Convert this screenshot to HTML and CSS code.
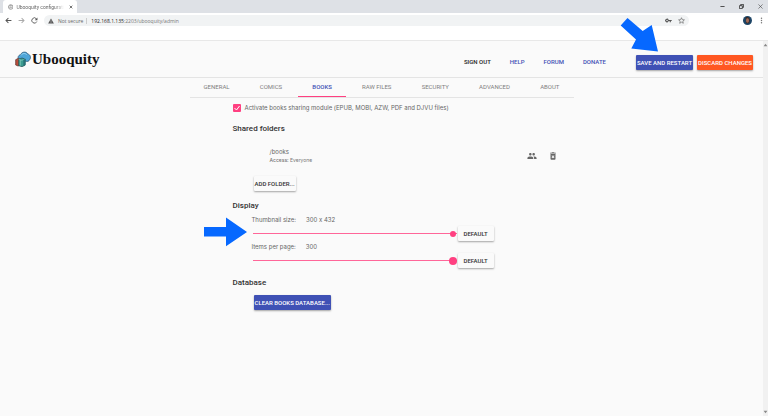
FILE: index.html
```html
<!DOCTYPE html>
<html lang="en">

<head>
  <meta charset="utf-8">
  <meta name="viewport" content="width=device-width, initial-scale=1.0">
  <title>Ubooquity configuration</title>
  <link rel="stylesheet" href="styles.css">
</head>

<body>
  <div class="tab-strip">
    <div class="browser-tab">
      <svg class="favicon" viewBox="0 0 24 24" fill="none" stroke="#777" stroke-width="3">
        <circle cx="12" cy="12" r="10" />
        <path d="M6 8l6-3 6 3M5 13l7 3 7-3M12 5v11" stroke-width="2" />
      </svg>
      <span class="tab-title">Ubooquity configurati</span>
      <button class="icon-btn tab-close" aria-label="Close tab">
        <svg viewBox="0 0 12 12" stroke="#333" stroke-width="2"><path d="M2 2l8 8M10 2l-8 8" /></svg>
      </button>
    </div>
    <div class="window-buttons">
      <button class="icon-btn" aria-label="Minimize">
        <svg viewBox="0 0 12 12" stroke="#333" stroke-width="2"><path d="M1 6h10" /></svg>
      </button>
      <button class="icon-btn" aria-label="Restore">
        <svg viewBox="0 0 12 12" fill="none" stroke="#333" stroke-width="2"><path d="M1 4h7v7H1zM4 4V1h7v7H8" /></svg>
      </button>
      <button class="icon-btn" aria-label="Close">
        <svg viewBox="0 0 12 12" stroke="#444" stroke-width="1.4"><path d="M1 1l10 10M11 1L1 11" /></svg>
      </button>
    </div>
  </div>

  <div class="toolbar">
    <button class="icon-btn" aria-label="Back">
      <svg viewBox="0 0 24 24" fill="#555"><path d="M22 10.500H7.200l5.600-5.600L10.500 2.500 1 12l9.500 9.500 2.300-2.400-5.600-5.600H22z" /></svg>
    </button>
    <button class="icon-btn" aria-label="Forward">
      <svg viewBox="0 0 24 24" fill="#aaa"><path d="M2 10.500h14.800l-5.600-5.600 2.300-2.400L23 12l-9.500 9.500-2.300-2.400 5.600-5.600H2z" /></svg>
    </button>
    <button class="icon-btn" aria-label="Reload">
      <svg viewBox="0 0 24 24" fill="none" stroke="#555" stroke-width="3"><path d="M20 15.500A9 9 0 1 1 18.500 6" /><path d="M22 2v9h-9z" fill="#555" stroke="none" /></svg>
    </button>
    <div class="address-bar">
      <svg class="warning" viewBox="0 0 24 24"><path d="M12 2l11.500 20H.5z" fill="#555" /><path d="M12 9v6M12 17v3" stroke="#f1f3f4" stroke-width="2" /></svg>
      <span class="not-secure">Not secure</span>
      <span class="url"><b>192.168.1.135</b>:2203/ubooquity/admin</span>
      <button class="icon-btn key" aria-label="Saved passwords">
        <svg viewBox="0 0 24 24" fill="#555"><path d="M12.600 10A6 6 0 1 0 12.600 14H16v4h4v-4h3v-4zM7 14.500a2.500 2.500 0 1 1 0-5 2.500 2.500 0 0 1 0 5z" /></svg>
      </button>
      <button class="icon-btn" aria-label="Bookmark">
        <svg viewBox="0 0 24 24" fill="none" stroke="#555" stroke-width="2"><path d="M12 2.500l2.900 6.600 7.100.7-5.400 4.700 1.600 7L12 17.800l-6.200 3.700 1.600-7L2 9.800l7.100-.7z" /></svg>
      </button>
    </div>
    <svg class="avatar" viewBox="0 0 24 24">
      <circle cx="12" cy="12" r="12" fill="#1d4566" />
      <path d="M7 4c6-3 11 1 11 7l-2 8H8z" fill="#3a2723" />
      <ellipse cx="12" cy="12" rx="4" ry="6" fill="#a26c58" />
    </svg>
    <button class="icon-btn" aria-label="Menu">
      <svg viewBox="0 0 24 24" fill="#777"><circle cx="12" cy="4" r="2.500" /><circle cx="12" cy="12" r="2.500" /><circle cx="12" cy="20" r="2.500" /></svg>
    </button>
  </div>

  <div class="viewport">
    <div class="page">
      <header class="header">
        <a class="logo" href="#">
          <svg viewBox="0 0 48 48">
            <path d="M13 28C6 22 9 12 17 11 20 1 35 1 38 9c8 1 11 11 6 17-2 5-7 6-11 5z" fill="#4ea5d8" stroke="#244d6c" stroke-width="2" />
            <path d="M18 13c5-7 13-7 17-2" fill="none" stroke="#9bd5f2" stroke-width="3" />
            <path d="M2 26l8-4 5 3v18l-6 2-7-3z" fill="#b94f3c" stroke="#5b2b28" stroke-width="2" />
            <path d="M11 25l10-4 9 3v19l-9 4-10-3z" fill="#3c9c91" stroke="#214d50" stroke-width="2" />
            <path d="M16 27v17M11 25l9 3 10-4" stroke="#8dd0c0" stroke-width="2" fill="none" />
            <path d="M25 26l7-3v18l-7 4z" fill="#277277" />
          </svg>
          <span>Ubooquity</span>
        </a>
        <nav class="links">
          <a class="sign-out" href="#">SIGN OUT</a>
          <a href="#">HELP</a>
          <a href="#">FORUM</a>
          <a href="#">DONATE</a>
        </nav>
        <div class="header-actions">
          <button class="btn btn-primary">SAVE AND RESTART</button>
          <button class="btn btn-accent">DISCARD CHANGES</button>
        </div>
      </header>

      <main class="container">
        <nav class="tabs">
          <a href="#">GENERAL</a>
          <a href="#">COMICS</a>
          <a class="active" href="#">BOOKS</a>
          <a href="#">RAW FILES</a>
          <a href="#">SECURITY</a>
          <a href="#">ADVANCED</a>
          <a href="#">ABOUT</a>
        </nav>

        <div class="content">
          <label class="activate">
            <input type="checkbox" checked>
            Activate books sharing module (EPUB, MOBI, AZW, PDF and DJVU files)
          </label>

          <h2>Shared folders</h2>
          <div class="folder">
            <div class="folder-info">
              <div class="folder-path">/books</div>
              <div class="folder-access"><b>Access:</b> Everyone</div>
            </div>
            <button class="icon-btn folder-icon" aria-label="Edit access">
              <svg viewBox="0 0 24 24" fill="#666"><path d="M16 11c1.660 0 2.990-1.340 2.990-3S17.660 5 16 5s-3 1.340-3 3 1.340 3 3 3zm-8 0c1.660 0 2.990-1.340 2.990-3S9.660 5 8 5 5 6.340 5 8s1.340 3 3 3zm0 2c-2.330 0-7 1.170-7 3.500V19h14v-2.500c0-2.330-4.670-3.500-7-3.500zm8 0c-.29 0-.62.02-.97.05 1.160.84 1.970 1.970 1.970 3.450V19h6v-2.500c0-2.330-4.670-3.500-7-3.500z" /></svg>
            </button>
            <button class="icon-btn folder-icon" aria-label="Remove folder">
              <svg viewBox="0 0 24 24" fill="#666"><path d="M6 19c0 1.100.9 2 2 2h8c1.100 0 2-.9 2-2V7H6v12zm2.460-7.120l1.410-1.410L12 12.590l2.120-2.120 1.410 1.410L13.410 14l2.120 2.120-1.410 1.410L12 15.410l-2.120 2.120-1.410-1.410L10.590 14l-2.130-2.120zM15.500 4l-1-1h-5l-1 1H5v2h14V4z" /></svg>
            </button>
          </div>
          <button class="btn indent">ADD FOLDER...</button>

          <h2>Display</h2>
          <div class="setting">
            <label for="thumbnail-size">Thumbnail size:</label>
            <output for="thumbnail-size">300 x 432</output>
          </div>
          <div class="slider-row">
            <input type="range" class="slider-small" id="thumbnail-size" min="50" max="300" value="300">
            <button class="btn">DEFAULT</button>
          </div>
          <div class="setting">
            <label for="items-per-page">Items per page:</label>
            <output for="items-per-page">300</output>
          </div>
          <div class="slider-row">
            <input type="range" id="items-per-page" min="1" max="300" value="300">
            <button class="btn">DEFAULT</button>
          </div>

          <h2>Database</h2>
          <button class="btn btn-primary indent">CLEAR BOOKS DATABASE...</button>
        </div>
      </main>
    </div>
    <div class="scrollbar">
      <svg viewBox="0 0 8 6" fill="#888"><path d="M4 1l3 4H1z" /></svg>
      <svg viewBox="0 0 8 6" fill="#888"><path d="M4 5l3-4H1z" /></svg>
    </div>
  </div>

  <!-- pointers over the page -->
  <svg class="arrow arrow-save" viewBox="0 0 38 34"><path d="M7.500 0L.7 7.400 16 21.400l-4.700 9L38 33.400 31.700 7l-9 6z" /></svg>
  <svg class="arrow arrow-slider" viewBox="0 0 43 30"><path d="M0 10h22V0.500L43 15 22 29.200V19.500H0z" /></svg>
</body>

</html>
```
FILE: styles.css
```css
html,
body {
  margin: 0;
  padding: 0;
  height: 100%;
}

body {
  display: flex;
  flex-direction: column;
  position: relative;
  font-family: Inter, "Liberation Sans", sans-serif;
  font-size: 6px;
  font-feature-settings: "calt" 0;
  line-height: 12px;
  color: #666666;
  background-color: #ffffff;
  overflow: hidden;
}

a {
  color: #3f51b5;
  text-decoration: none;
}

svg {
  display: block;
}

.icon-btn {
  flex: none;
  width: 7px;
  height: 7px;
  padding: 0;
  border: none;
  background: none;
}

/* browser window */
.tab-strip {
  display: flex;
  justify-content: space-between;
  height: 13px;
  padding-left: 3px;
  background-color: #dee1e6;
}

.browser-tab {
  display: flex;
  align-items: center;
  width: 74px;
  padding: 0 4px 0 5px;
  box-sizing: border-box;
  border-radius: 3px 3px 0 0;
  background-color: #ffffff;
}

.favicon {
  width: 6px;
  height: 6px;
  margin-right: 3px;
}

.tab-title {
  flex: 1;
  white-space: nowrap;
  font-family: Roboto, sans-serif;
  font-size: 5px;
  mask-image: linear-gradient(to right, #000 80%, transparent);
}

.tab-close {
  width: 4px;
  height: 4px;
  margin-left: 5px;
}

.window-buttons {
  display: flex;
  gap: 14px;
  padding: 4px 5px 0 0;
}

.window-buttons .icon-btn {
  width: 5px;
  height: 5px;
}

.toolbar {
  display: flex;
  align-items: center;
  gap: 6px;
  height: 15px;
  padding: 0 3px 0 5px;
}

.address-bar {
  flex: 1;
  display: flex;
  align-items: center;
  height: 11px;
  padding: 0 4px;
  border-radius: 6px;
  background-color: #f1f3f4;
  font-family: "Open Sans", sans-serif;
  font-size: 5px;
}

.warning {
  width: 6px;
  height: 6px;
  margin-right: 4px;
}

.not-secure {
  line-height: 6px;
  padding-right: 3px;
  margin-right: 4px;
  border-right: 1px solid #cccccc;
}

.url {
  flex: 1;
  color: #777777;
}

.url b {
  font-weight: 400;
  color: #222222;
}

.key {
  margin-right: 6px;
}

.avatar {
  width: 9px;
  height: 9px;
  margin-left: 48px;
}

.viewport {
  flex: 1;
  display: flex;
  margin-top: 12px;
  border-top: 1px solid #e8e8e8;
}

.page {
  flex: 1;
  background-color: #fafafa;
}

.scrollbar {
  display: flex;
  flex-direction: column;
  justify-content: space-between;
  width: 5px;
  padding: 2px 0;
  box-sizing: border-box;
  background-color: #f1f1f1;
}

/* header */
.header {
  display: flex;
  align-items: center;
  height: 36px;
  padding: 0 10px 0 15px;
  border-bottom: 1px solid #e4e4e4;
}

.logo {
  display: flex;
  align-items: center;
  gap: 1px;
  flex: 1;
  font: bold 15px/18px "Liberation Serif", serif;
  color: #111111;
}

.logo svg {
  width: 16px;
  height: 16px;
}

.links {
  display: flex;
  gap: 19px;
  padding-top: 6px;
  margin-right: 30px;
  font-family: Roboto, "Liberation Sans", sans-serif;
  font-weight: 500;
}

.links .sign-out {
  color: #222222;
}

.header-actions {
  display: flex;
  gap: 4px;
  padding-top: 6px;
}

.btn {
  display: block;
  height: 15px;
  padding: 0 1px;
  border: none;
  border-radius: 1px;
  font: 500 6px/15px Roboto, "Liberation Sans", sans-serif;
  color: #333333;
  background-color: #fafafa;
  box-shadow: 0 1px 2px rgba(0, 0, 0, 0.35);
  white-space: nowrap;
}

.btn-primary {
  color: #ffffff;
  background-color: #3f51b5;
}

.btn-accent {
  color: #ffffff;
  background-color: #ff5722;
}

/* settings */
.container {
  width: 384px;
  max-width: 100%;
  margin: 0 auto;
}

.tabs {
  display: flex;
  justify-content: space-between;
  border-bottom: 1px solid #e4e4e4;
  font-family: Roboto, "Liberation Sans", sans-serif;
  line-height: 18px;
}

.tabs a {
  padding: 0 14px;
  color: #808080;
  border-bottom: 1px solid transparent;
}

.tabs .active {
  font-weight: 500;
  color: #3f51b5;
  border-bottom-color: #ff4081;
}

.content {
  padding: 4px 16px 0 43px;
}

.activate {
  display: flex;
  align-items: center;
  gap: 4px;
}

.activate input {
  appearance: none;
  width: 8px;
  height: 8px;
  margin: 0;
  border-radius: 1px;
  background: #ff4081 url("data:image/svg+xml,%3Csvg xmlns='http://www.w3.org/2000/svg' viewBox='0 0 8 8'%3E%3Cpath d='M1.500 4l2 2 3-4' fill='none' stroke='white'/%3E%3C/svg%3E");
}

h2 {
  margin: 9px 0 2px;
  font-family: Roboto, "Liberation Sans", sans-serif;
  font-size: 8px;
  font-weight: 500;
  line-height: 12px;
  color: #333333;
}

.folder {
  display: flex;
  align-items: center;
  gap: 11px;
  margin: 12px 0 11px;
  padding-left: 37px;
}

.folder-info {
  flex: 1;
  line-height: 9px;
}

.folder-access {
  font-size: 5px;
  color: #777777;
}

.folder-access b {
  font-weight: 500;
}

.folder-icon {
  width: 10px;
  height: 10px;
}

.indent {
  margin-left: 21px;
}

.setting {
  display: flex;
  gap: 10px;
  padding-left: 19px;
}

.slider-row {
  display: flex;
  align-items: center;
  gap: 1px;
  padding-left: 20px;
}

.slider-row .btn {
  padding: 0 6px;
}

input[type="range"] {
  appearance: none;
  width: 204px;
  height: 8px;
  margin: 0;
  background: linear-gradient(#ff6699, #ff6699) center / 100% 1px no-repeat;
}

input[type="range"]::-webkit-slider-thumb {
  appearance: none;
  box-sizing: border-box;
  width: 8px;
  height: 8px;
  border-radius: 50%;
  background: #ff4081 padding-box;
}

.slider-small::-webkit-slider-thumb {
  border: 1px solid transparent;
}

h2 + .btn {
  margin-top: 6px;
}

.slider-row + h2 {
  margin-bottom: 6px;
}

/* pointers */
.arrow {
  position: absolute;
  fill: #0668ff;
}

.arrow-save {
  top: 18px;
  left: 620px;
  width: 38px;
}

.arrow-slider {
  top: 217px;
  left: 204px;
  width: 43px;
}
```
